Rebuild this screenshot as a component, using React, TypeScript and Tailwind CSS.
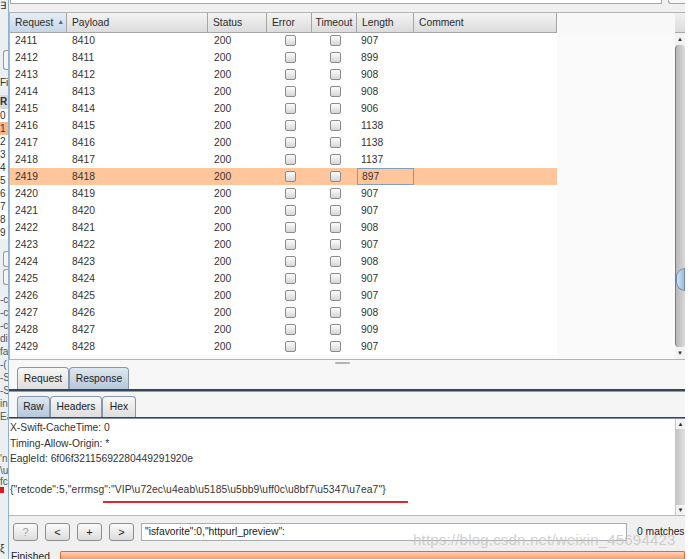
import React from 'react';

const rows: [number, number][] = [
  [2411, 907], [2412, 899], [2413, 908], [2414, 908], [2415, 906],
  [2416, 1138], [2417, 1138], [2418, 1137], [2419, 897], [2420, 907],
  [2421, 907], [2422, 908], [2423, 907], [2424, 908], [2425, 907],
  [2426, 907], [2427, 908], [2428, 909], [2429, 907],
];

const cols = [
  { name: 'Request', w: 'w-[57px]' },
  { name: 'Payload', w: 'w-[141px]' },
  { name: 'Status', w: 'w-[59px]' },
  { name: 'Error', w: 'w-[45px]' },
  { name: 'Timeout', w: 'w-[45px]' },
  { name: 'Length', w: 'w-[57px]' },
  { name: 'Comment', w: 'w-[143px]' },
];

function Check() {
  return <span className="block w-[11px] h-[11px] rounded-[2px] border border-[#8c8c8c] bg-linear-to-b from-[#fdfdfd] to-[#d6d6d6]" />;
}

function Tab({ label, active, w }: { label: string; active?: boolean; w: string }) {
  return (
    <div
      className={
        'h-full flex items-center justify-center rounded-t-[4px] border border-b-0 border-[#8797aa] ' +
        w +
        (active ? ' bg-linear-to-b from-[#dfe8f1] to-[#b4c7da]' : ' bg-linear-to-b from-[#f7f7f7] to-[#dedede]')
      }
    >
      {label}
    </div>
  );
}

function Btn({ label, dim }: { label: string; dim?: boolean }) {
  return (
    <div
      className={
        'w-[25px] h-[18px] rounded-[3px] border border-[#8e8f8f] bg-linear-to-b from-[#fbfbfb] to-[#dcdcdc] flex items-center justify-center text-[11px] ' +
        (dim ? 'text-[#a0a0a0]' : 'text-[#222]')
      }
    >
      {label}
    </div>
  );
}

function Scrollbar({ thumb }: { thumb?: boolean }) {
  return (
    <div className="w-[10px] flex flex-col bg-[#f2f2f2]">
      <div className="h-[12px] flex items-center justify-center text-[6px] text-[#333]">▲</div>
      <div className="flex-1 flex flex-col rounded-t-[4px] rounded-b-[4px] border-l border-[#7d7d7d] bg-linear-to-r from-[#b9b9b9] to-[#d8d8d8]">
        {thumb && (
          <>
            <div className="h-[223px]" />
            <div className="h-[23px] rounded-l-full bg-linear-to-r from-[#cde0f2] to-[#9dbbd8] border border-[#6f8fae]" />
          </>
        )}
      </div>
      <div className="h-[12px] flex items-center justify-center text-[6px] text-[#333]">▼</div>
    </div>
  );
}

function LeftStrip() {
  const frag = (t: string, h: string, extra = '') => (
    <div className={'whitespace-nowrap overflow-hidden flex items-center ' + h + ' ' + extra}>{t}</div>
  );
  return (
    <div className="w-[8px] shrink-0 overflow-hidden bg-[#eceff2] text-[10px] leading-none text-[#333] flex flex-col">
      {frag('∃', 'h-[12px]')}
      <div className="h-[38px]" />
      <div className="h-[20px] ml-[3px] border-l border-y border-[#9a9a9a] rounded-l-[3px] bg-[#f4f4f4]" />
      <div className="h-[6px]" />
      {frag('Fi', 'h-[13px]')}
      <div className="h-[6px]" />
      {frag('R', 'h-[14px]', 'bg-[#dadada] font-bold')}
      {['0', '1', '2', '3', '4', '5', '6', '7', '8', '9'].map((d) => (
        <div key={d} className={'h-[13px] flex items-center ' + (d === '1' ? 'bg-[#f7b98a]' : 'bg-white')}>
          {d}
        </div>
      ))}
      <div className="h-[12px]" />
      <div className="h-[16px] ml-[3px] border-l border-y border-[#9a9a9a] rounded-l-[3px] bg-[#f4f4f4]" />
      <div className="h-[2px]" />
      <div className="h-[16px] ml-[3px] border-l border-y border-[#9a9a9a] rounded-l-[3px] bg-[#f4f4f4]" />
      <div className="h-[8px]" />
      {['-c', '-c', '-c', 'di', 'fa', '-(', '-S', '-S', 'in', 'Ea'].map((t, i) => (
        <div key={i} className="h-[13px] flex items-center whitespace-nowrap text-[#555]">{t}</div>
      ))}
      <div className="h-[30px]" />
      {frag("'n", 'h-[12px]', 'text-[#555]')}
      {frag('\\u', 'h-[12px]', 'text-[#555]')}
      {frag('fc', 'h-[10px]', 'text-[#555]')}
      <div className="h-[6px] w-[4px] bg-[#e01818]" />
      <div className="h-[50px]" />
      {frag('ξ', 'h-[12px]')}
    </div>
  );
}

export default function App() {
  return (
    <div className="relative w-[693px] h-[559px] overflow-hidden bg-white flex font-['Liberation_Sans',Arial,sans-serif] text-[10.3px] text-[#2a2a2a]">
      <LeftStrip />
      <div className="w-px shrink-0 bg-[#8fb2d4]" />

      <div className="w-[676px] shrink-0 flex flex-col bg-[#f0f0f0]">
        {/* top search field remnant */}
        <div className="h-[12px] flex items-start">
          <div className="ml-[1px] w-[652px] h-[4px] bg-white border-x border-b border-[#a7a7a7]" />
          <div className="ml-[6px] w-[17px] h-[4px] bg-[#f7f7f7] border-l border-b border-[#a7a7a7] rounded-bl-[3px]" />
        </div>

        {/* results table */}
        <div className="h-[348px] flex flex-col border-t border-l border-b border-[#b3b3b3] bg-[#fafafa]">
          <div className="h-[20px] flex shrink-0">
            {cols.map((c, i) => (
              <div
                key={c.name}
                className={
                  'h-full flex items-center px-[5px] border-r border-b border-[#a6a6a6] ' +
                  c.w +
                  (i === 0
                    ? ' bg-linear-to-b from-[#e6eef6] to-[#c6d6e6]'
                    : ' bg-linear-to-b from-[#f4f4f4] to-[#dcdcdc]') +
                  (c.name === 'Timeout' ? ' justify-center px-0' : '')
                }
              >
                {c.name}
                {i === 0 && <span className="ml-[4px] text-[7px] text-[#4f6f91]">▲</span>}
              </div>
            ))}
            <div className="flex-1 bg-[#f8f8f8]" />
            <div className="w-[10px] bg-linear-to-b from-[#f0f0f0] to-[#dcdcdc] border-b border-[#a6a6a6]" />
          </div>

          <div className="flex-1 flex min-h-0">
            <div className="flex-1 overflow-hidden bg-[#fafafa]">
              <div className="w-[547px] -mt-[1px] bg-white text-[#333]">
                {rows.map(([req, len]) => {
                  const sel = req === 2419;
                  return (
                    <div key={req} className={'h-[17px] flex items-center ' + (sel ? 'bg-[#ffc69b]' : '')}>
                      <div className="w-[57px] pl-[5px]">{req}</div>
                      <div className="w-[141px] pl-[5px]">{req + 5999}</div>
                      <div className="w-[59px] pl-[6px]">200</div>
                      <div className="w-[45px] flex justify-center pl-[1px]"><Check /></div>
                      <div className="w-[45px] flex justify-center pl-[1px]"><Check /></div>
                      <div
                        className={
                          'w-[57px] h-full flex items-center pl-[4px] ' + (sel ? 'border border-[#7f9fc0]' : '')
                        }
                      >
                        {len}
                      </div>
                      <div className="w-[143px]" />
                    </div>
                  );
                })}
              </div>
            </div>
            <Scrollbar thumb />
          </div>
        </div>

        {/* splitter */}
        <div className="h-[7px] bg-[#f7f7f7] flex justify-center">
          <div className="mt-[2px] ml-[-10px] w-[15px] h-[2px] rounded-full bg-[#b4b4b4]" />
        </div>

        {/* request / response tabs */}
        <div className="h-[22px] bg-[#f7f7f7] flex items-end pl-[8px] text-[#222]">
          <Tab label="Request" w="w-[52px]" />
          <Tab label="Response" w="w-[60px]" active />
        </div>
        <div className="h-[3px] border-t-2 border-[#35455a] bg-[#8d9db0]" />

        {/* raw / headers / hex */}
        <div className="h-[25px] bg-[#f5f5f5] flex items-end pl-[8px] pt-[4px] text-[#222]">
          <Tab label="Raw" w="w-[33px]" active />
          <Tab label="Headers" w="w-[52px]" />
          <Tab label="Hex" w="w-[34px]" />
        </div>
        <div className="h-[2px] border-t border-[#35455a] bg-[#7f90a4]" />

        {/* response body */}
        <div className="h-[96px] flex">
          <div className="flex-1 bg-white pl-[1px] pt-[1px] leading-[15.5px] text-[#333]">
            <div>X-Swift-CacheTime: 0</div>
            <div>Timing-Allow-Origin: *</div>
            <div>EagleId: 6f06f32115692280449291920e</div>
            <div className="h-[15.5px]" />
            <div className="tracking-[0.1px]">{'{"retcode":5,"errmsg":"VIP\\u72ec\\u4eab\\u5185\\u5bb9\\uff0c\\u8bf7\\u5347\\u7ea7"}'}</div>
            <div className="ml-[93px] mt-[3px] w-[305px] h-[2px] bg-[#e3262a]" />
          </div>
          <div className="w-[10px] flex flex-col bg-[#f2f2f2] border-l border-[#c8c8c8]">
            <div className="h-[10px] flex items-center justify-center text-[6px]">▲</div>
            <div className="flex-1 bg-linear-to-r from-[#c4c4c4] to-[#e2e2e2]" />
            <div className="h-[10px] flex items-center justify-center text-[6px]">▼</div>
          </div>
        </div>

        {/* find bar */}
        <div className="h-[4px] border-t border-[#b8b8b8]" />
        <div className="h-[26px] flex items-center pl-[4px] gap-[7px]">
          <Btn label="?" dim />
          <Btn label="<" />
          <Btn label="+" />
          <Btn label=">" />
          <div className="w-[486px] h-[18px] bg-white border border-[#a9abb0] flex items-center pl-[3px] text-[#222]">
            {'"isfavorite":0,"httpurl_preview":'}
          </div>
          <div className="ml-[3px] whitespace-nowrap text-[#222]">0 matches</div>
        </div>

        {/* status bar */}
        <div className="flex-1 flex items-end">
          <div className="w-[51px] pl-[2px] leading-[8px] h-[6px] overflow-visible text-[#222]">Finished</div>
          <div className="flex-1 h-[8px] border-t border-x border-[#e0693a] rounded-t-[2px] bg-linear-to-b from-[#ffd2b8] to-[#ff9865]" />
        </div>
      </div>

      <div className="w-[8px] shrink-0 bg-white" />

      <div className="absolute left-[413px] top-[532px] text-[15px] leading-none tracking-[0.2px] text-[#c4c4c4]/80 whitespace-nowrap pointer-events-none">
        https://blog.csdn.net/weixin_45694423
      </div>
    </div>
  );
}
